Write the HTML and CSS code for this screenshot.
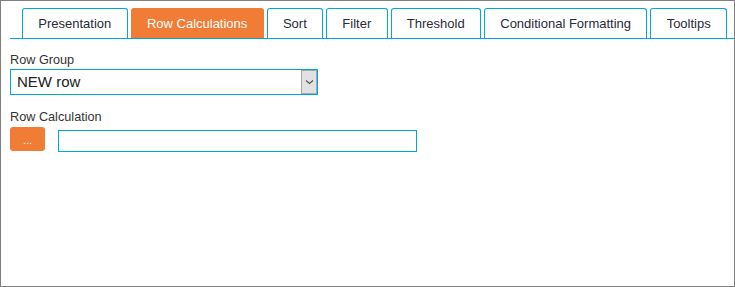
FILE: index.html
```html
<!DOCTYPE html>
<html>
<head>
<meta charset="utf-8">
<link rel="stylesheet" href="styles.css">
</head>
<body>
<div class="panel">
  <div class="tabs">
    <div class="tab">Presentation</div>
    <div class="tab active">Row Calculations</div>
    <div class="tab">Sort</div>
    <div class="tab">Filter</div>
    <div class="tab">Threshold</div>
    <div class="tab">Conditional Formatting</div>
    <div class="tab">Tooltips</div>
  </div>
  <div class="content">
    <div class="label">Row Group</div>
    <div class="select">
      <span class="select-value">NEW row</span>
      <span class="select-arrow"><svg width="9" height="6" viewBox="0 0 9 6"><path d="M1 1.5 L4.5 4.5 L8 1.5" fill="none" stroke="#555" stroke-width="1.2"/></svg></span>
    </div>
    <div class="label label2">Row Calculation</div>
    <div class="calc-row">
      <button class="dots">...</button>
      <input class="calc-input" type="text">
    </div>
  </div>
</div>
</body>
</html>
```
FILE: styles.css
```css
* { box-sizing: border-box; }
html, body { margin: 0; padding: 0; background: #fff; }
body { font-family: "Liberation Sans", Arial, sans-serif; color: #333; }
.panel {
  width: 735px;
  height: 287px;
  border: 1px solid #808080;
}
.tabs {
  display: flex;
  gap: 3px;
  margin: 7px 0 0 9px;
  padding-left: 12px;
  border-bottom: 1px solid #00a7dd;
}
.tab {
  height: 30px;
  line-height: 29px;
  padding: 0 15.3px;
  font-size: 13px;
  color: #2a2a3a;
  border: 1px solid #00a7dd;
  border-bottom: none;
  border-radius: 3px 3px 0 0;
  background: #fff;
}
.tab.active {
  background: #f07c36;
  border-color: #f07c36;
  color: #fff;
}
.content {
  padding: 13px 0 0 9px;
}
.label {
  font-size: 12.7px;
  line-height: 16px;
  color: #333;
  margin-bottom: 1px;
}
.label2 { margin-top: 14px; margin-bottom: 2px; }
.select {
  display: flex;
  width: 308px;
  height: 26px;
  border: 1px solid #00a7dd;
  align-items: stretch;
}
.select-value {
  flex: 1;
  font-size: 15px;
  line-height: 24px;
  padding-left: 6px;
  color: #222;
}
.select-arrow {
  width: 16px;
  background: #e1e1e1;
  border: 1px solid #a8a8a8;
  display: flex;
  align-items: center;
  justify-content: center;
}
.calc-row {
  display: flex;
  align-items: flex-start;
  gap: 13px;
}
.dots {
  width: 35px;
  height: 24px;
  background: #f07c36;
  border: none;
  border-radius: 3px;
  color: #fff;
  font-family: "Liberation Sans", Arial, sans-serif;
  font-size: 11px;
  padding: 2px 0 0;
  line-height: 22px;
}
.calc-input {
  margin-top: 3px;
  width: 359px;
  height: 22px;
  border: 1px solid #00a7dd;
  padding: 0 4px;
  outline: none;
}
```
